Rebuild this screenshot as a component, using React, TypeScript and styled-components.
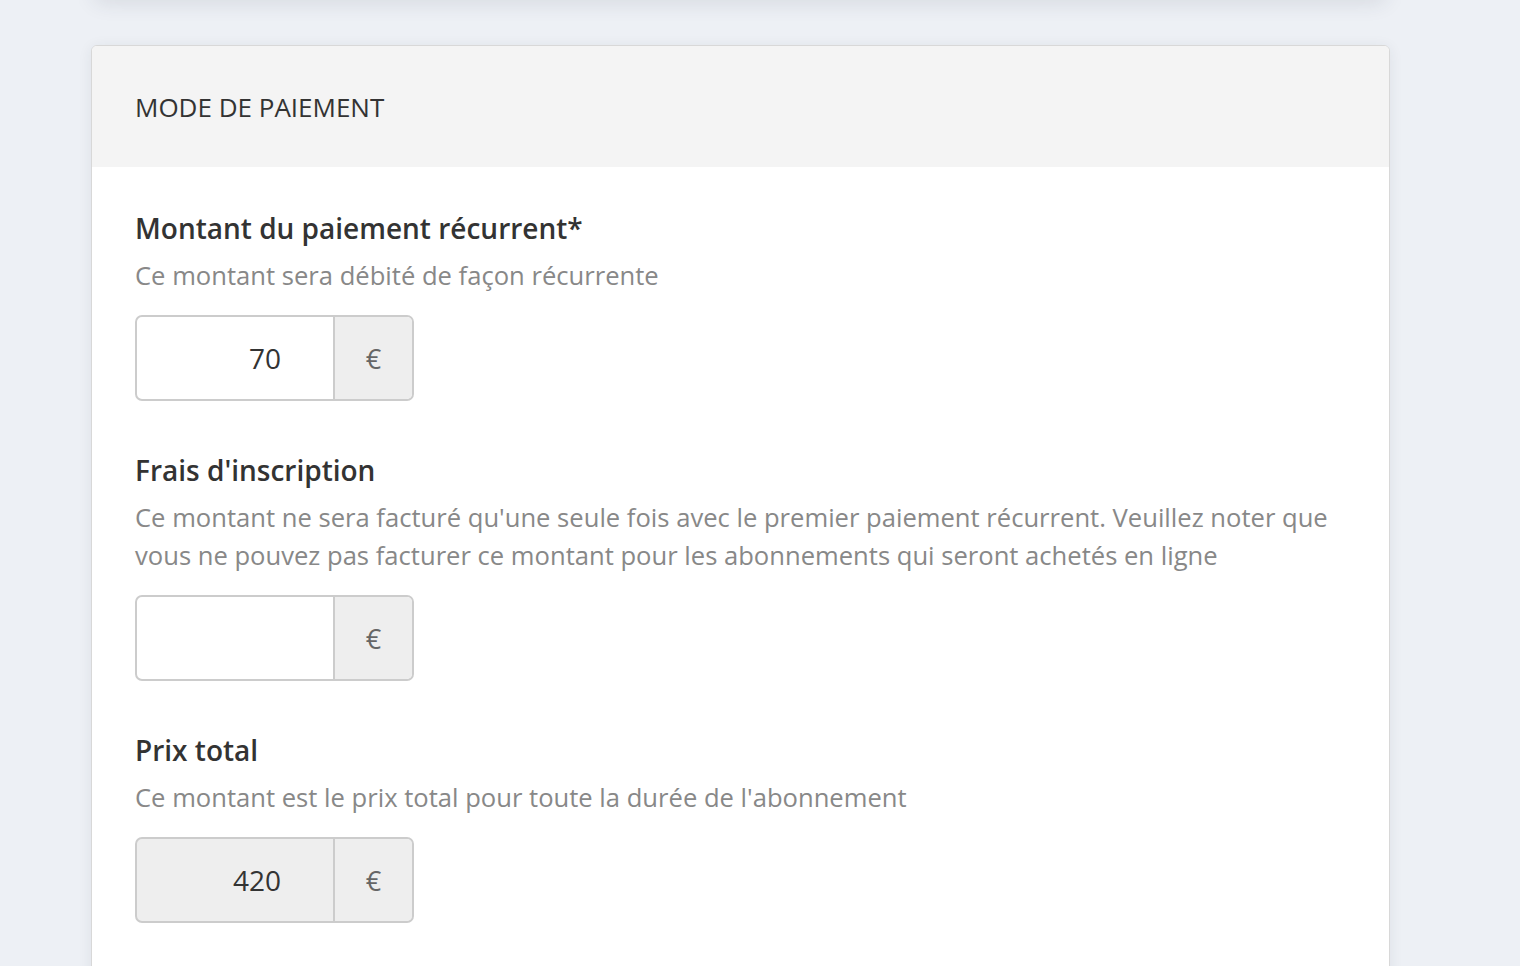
import React from "react";
import styled, { createGlobalStyle } from "styled-components";

const GlobalStyle = createGlobalStyle`
  html, body {
    margin: 0;
    padding: 0;
    background: #edf0f5;
    font-family: "Open Sans", "Liberation Sans", sans-serif;
  }
`;

const Page = styled.div`
  height: 966px;
  overflow: hidden;
  padding-left: 91px;
`;

const PreviousCard = styled.div`
  width: 1290px;
  height: 20px;
  margin-top: -25px;
  margin-left: 4px;
  background: #ffffff;
  border-radius: 6px;
  box-shadow: 0 6px 22px rgba(40, 50, 70, 0.14);
`;

const Card = styled.section`
  width: 1299px;
  box-sizing: border-box;
  margin-top: 50px;
  background: #ffffff;
  border: 1px solid #d8d8d8;
  border-radius: 6px;
  box-shadow: 0 2px 14px rgba(40, 50, 70, 0.08);
  overflow: hidden;
`;

const CardHeader = styled.header`
  height: 121px;
  display: flex;
  align-items: center;
  padding: 0 43px;
  background: #f4f4f4;
`;

const CardTitle = styled.h2`
  margin: 0;
  font-size: 26px;
  font-weight: 500;
  color: #333333;
`;

const CardBody = styled.div`
  padding: 42px 43px 80px;
  display: flex;
  flex-direction: column;
  gap: 50px;
`;

const Field = styled.div`
  display: flex;
  flex-direction: column;
`;

const Label = styled.label`
  font-size: 28px;
  line-height: 38px;
  font-weight: 600;
  color: #333333;
`;

const Hint = styled.p`
  margin: 10px 0 20px;
  font-size: 25.6px;
  line-height: 38px;
  color: #888888;
`;

const InputGroup = styled.div<{ $disabled?: boolean }>`
  display: flex;
  width: 279px;
  height: 86px;
  box-sizing: border-box;
  border: 2px solid #cccccc;
  border-radius: 7px;
  overflow: hidden;
  background: ${(p) => (p.$disabled ? "#eeeeee" : "#ffffff")};
`;

const AmountInput = styled.input`
  width: 196px;
  box-sizing: border-box;
  border: none;
  outline: none;
  background: transparent;
  padding: 0 52px 0 10px;
  text-align: right;
  font-family: inherit;
  font-size: 28px;
  color: #333333;
`;

const Addon = styled.span`
  flex: 1;
  display: flex;
  align-items: center;
  justify-content: center;
  border-left: 2px solid #cccccc;
  background: #eeeeee;
  font-size: 27px;
  color: #666666;
`;

type FieldData = {
  label: string;
  hint: string;
  value: string;
  disabled?: boolean;
};

const fields: FieldData[] = [
  {
    label: "Montant du paiement récurrent*",
    hint: "Ce montant sera débité de façon récurrente",
    value: "70",
  },
  {
    label: "Frais d'inscription",
    hint: "Ce montant ne sera facturé qu'une seule fois avec le premier paiement récurrent. Veuillez noter que vous ne pouvez pas facturer ce montant pour les abonnements qui seront achetés en ligne",
    value: "",
  },
  {
    label: "Prix total",
    hint: "Ce montant est le prix total pour toute la durée de l'abonnement",
    value: "420",
    disabled: true,
  },
];

const App: React.FC = () => {
  return (
    <>
      <GlobalStyle />
      <Page>
        <PreviousCard />
        <Card>
          <CardHeader>
            <CardTitle>MODE DE PAIEMENT</CardTitle>
          </CardHeader>
          <CardBody>
            {fields.map((f) => (
              <Field key={f.label}>
                <Label>{f.label}</Label>
                <Hint>{f.hint}</Hint>
                <InputGroup $disabled={f.disabled}>
                  <AmountInput
                    defaultValue={f.value}
                    disabled={f.disabled}
                    readOnly={f.disabled}
                  />
                  <Addon>€</Addon>
                </InputGroup>
              </Field>
            ))}
          </CardBody>
        </Card>
      </Page>
    </>
  );
};

export default App;
